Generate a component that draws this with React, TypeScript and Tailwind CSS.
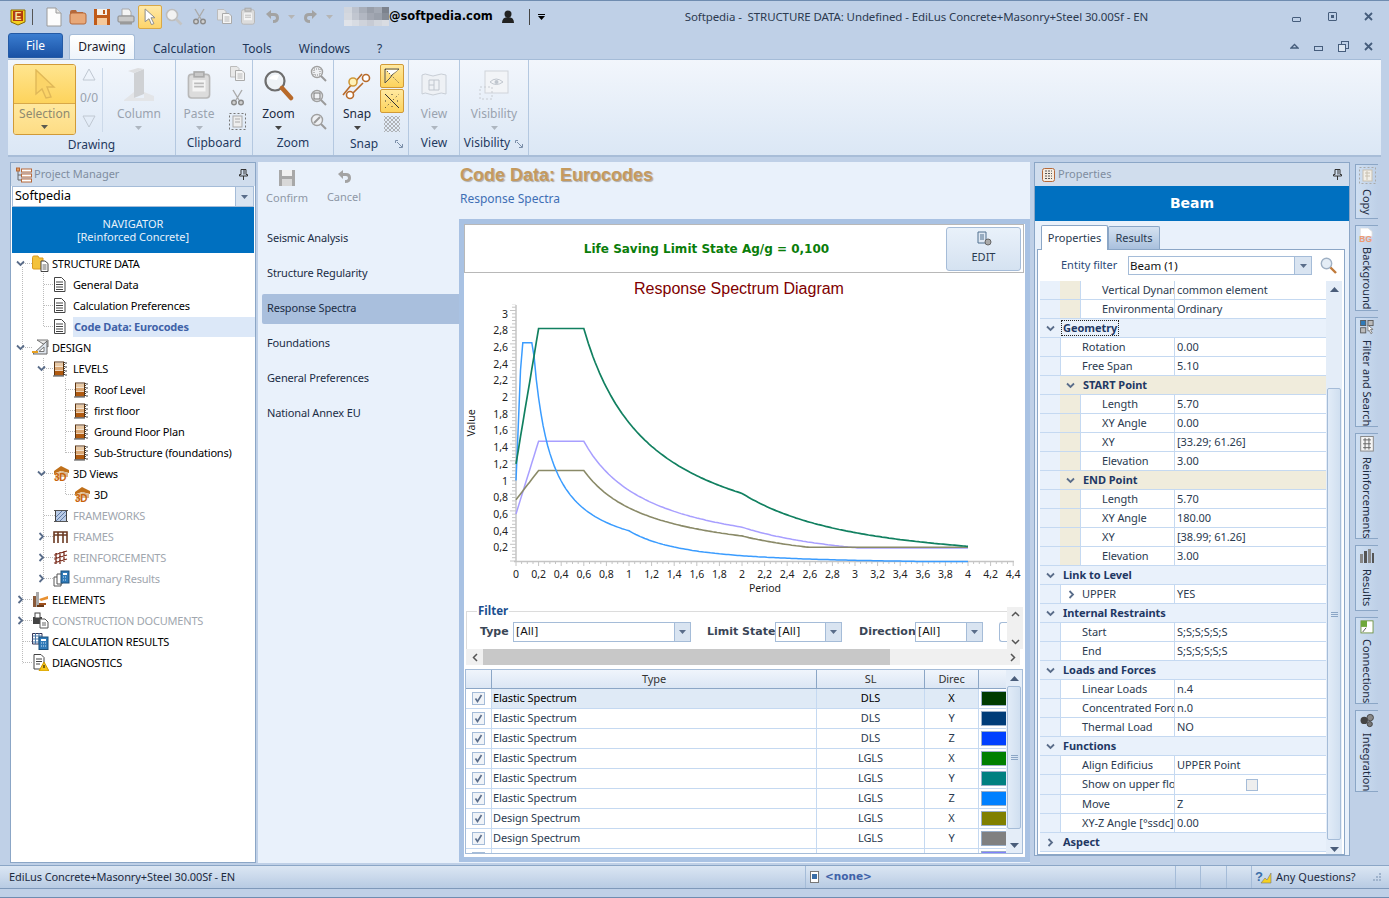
import React from "react";

const ui = "font-['Noto_Sans','Open_Sans',sans-serif]";

const Chev = ({ open, className = "" }: { open: boolean; className?: string }) => (
  <svg width="9" height="9" viewBox="0 0 9 9" className={className}>
    {open ? <path d="M1 2.5 L4.5 6 L8 2.5" fill="none" stroke="#5a6d8a" strokeWidth="1.8" /> : <path d="M2.5 1 L6 4.5 L2.5 8" fill="none" stroke="#5a6d8a" strokeWidth="1.8" />}
  </svg>
);

const Drop = ({ c = "#555" }: { c?: string }) => (
  <svg width="7" height="4" viewBox="0 0 7 4"><path d="M0 0H7L3.5 4Z" fill={c} /></svg>
);

const Doc = () => (
  <svg width="13" height="15" viewBox="0 0 13 15"><path d="M1.5.5H8.5L12 4V14.5H1.5Z" fill="#fff" stroke="#444" /><path d="M3 5H10M3 7.5H10M3 10H10M3 12.5H10" stroke="#444" /></svg>
);
const FolderDoc = () => (
  <svg width="17" height="17" viewBox="0 0 17 17"><path d="M0.5 2.5Q.5 1 2 1H6L7 3H11V14H2Q.5 14 .5 13Z" fill="#f3c23c" stroke="#d99a20" /><path d="M9 6H13L16 8.5V16.5H9Z" fill="#fff" stroke="#444" /><path d="M10.5 10H14.5M10.5 12H14.5M10.5 14H14.5" stroke="#666" /></svg>
);
const Design = () => (
  <svg width="17" height="17" viewBox="0 0 17 17"><path d="M5 1H16V8Z" fill="#e8e8e8" stroke="#777" /><path d="M1 15L15 2V15Z" fill="#dfe6ee" stroke="#666" /><path d="M7 12.5L12 8V12.5Z" fill="#fff" stroke="#777" /><path d="M0 12H6V14H0Z" fill="#e8a020" /></svg>
);
const Levels = () => (
  <svg width="16" height="16" viewBox="0 0 16 16"><rect x="1.5" y="1" width="9" height="13" fill="#fff" stroke="#5a3310" /><rect x="2" y="2" width="8" height="3.5" fill="#e8c9a5" /><rect x="2" y="6" width="8" height="3.5" fill="#dba875" /><rect x="2" y="10" width="8" height="4" fill="#b05a10" /><path d="M0 15H11" stroke="#444" /><path d="M12 2H15M12 6H15M12 10H15M12 14H15" stroke="#444" strokeDasharray="2 1" /><path d="M11.5 1V15" stroke="#444" strokeDasharray="1 1" /></svg>
);
const ThreeD = () => (
  <svg width="17" height="17" viewBox="0 0 17 17"><path d="M1 6L8 1L16 5V8L8 6L1 9Z" fill="#c0701a" /><path d="M2 8L8 6V14H2Z" fill="#e8c79f" /><path d="M8 6L15 8V12H8Z" fill="#d8b78f" /><text x="1" y="16" fontSize="10" fontWeight="700" fill="#c8620a" fontFamily="Liberation Sans">3D</text></svg>
);
const Framework = () => (
  <svg width="16" height="16" viewBox="0 0 16 16"><rect x="2.5" y="2.5" width="11" height="11" fill="#b9cbe6" stroke="#444" /><path d="M3 9L9 3M3 13L13 3M7 13L13 7" stroke="#607ba5" /><path d="M1 2.5H15M1 13.5H15" stroke="#555" /></svg>
);
const Frames = () => (
  <svg width="15" height="14" viewBox="0 0 15 14"><path d="M1 13V2H14V13M5 13V2M10 13V2M1 5H14" fill="none" stroke="#6b3a22" strokeWidth="1.6" /></svg>
);
const Reinf = () => (
  <svg width="15" height="15" viewBox="0 0 15 15"><path d="M1 5L14 1M1 9L14 5M1 13L14 9M3 3V14M7 2V14M11 1V12" fill="none" stroke="#7a2c1c" strokeWidth="1.3" /></svg>
);
const Summary = () => (
  <svg width="17" height="17" viewBox="0 0 17 17"><path d="M1 7H8V16H1Z" fill="#fff" stroke="#555" /><path d="M4 4H9V14H4Z" fill="#fff" stroke="#555" /><rect x="8" y="1" width="8" height="12" fill="#2f7ab8" stroke="#1c507c" /><rect x="10" y="3" width="4" height="2" fill="#fff" /><path d="M10 7H14M10 10H14" stroke="#cfe3f5" strokeDasharray="1 1" /></svg>
);
const Elements = () => (
  <svg width="17" height="17" viewBox="0 0 17 17"><rect x="4" y="1" width="3" height="15" fill="#aaa" /><rect x="1" y="5" width="3" height="11" fill="#8a5a3a" /><path d="M7 8L16 5V8L9 10Z" fill="#e89030" /><path d="M7 12H14V14H7Z" fill="#a0501c" /><path d="M5 14H12V16H5Z" fill="#6a3a18" /></svg>
);
const ConstDoc = () => (
  <svg width="17" height="17" viewBox="0 0 17 17"><rect x="1" y="5" width="9" height="7" fill="#444" /><rect x="3" y="1" width="5" height="5" fill="#fff" stroke="#444" /><path d="M8 7H13L16 10V16H8Z" fill="#fff" stroke="#555" /><path d="M10 11H14M10 13H14" stroke="#666" /></svg>
);
const CalcRes = () => (
  <svg width="17" height="17" viewBox="0 0 17 17"><path d="M0.5.5H10V11H.5Z" fill="#fff" stroke="#335" /><path d="M.5 3H10M.5 6H10M.5 9H10M3.5 0V11M7 0V11" stroke="#4a78a8" /><rect x="7" y="4" width="9" height="12.5" fill="#2f7ab8" stroke="#1c507c" /><rect x="9" y="6" width="5" height="2" fill="#fff" /><path d="M9 10H14M9 13H14" stroke="#cfe3f5" strokeDasharray="1 1" /></svg>
);
const Diag = () => (
  <svg width="17" height="17" viewBox="0 0 17 17"><path d="M2 .5H9L12 3.5V15H2Z" fill="#fff" stroke="#444" /><path d="M4 5H10M4 7.5H10M4 10H8" stroke="#444" /><path d="M12 8L17 17H7Z" fill="#f5c518" stroke="#d09a00" /><path d="M12 11V14" stroke="#000" /></svg>
);

const PageIc = () => (
  <svg width="17" height="20" viewBox="0 0 17 20"><path d="M2 1H11L16 6V19H2Z" fill="#fcfcfc" stroke="#9a9a9a" /><path d="M11 1V6H16" fill="#e4e4e4" stroke="#9a9a9a" /></svg>
);
const FolderIc = () => (
  <svg width="18" height="18" viewBox="0 0 18 18"><path d="M1 4Q1 2 3 2H7L8 4H14V6H1Z" fill="#b5693a" /><rect x="1" y="5" width="16" height="11" rx="2" fill="#e8a878" stroke="#b5693a" /></svg>
);
const SaveIc = () => (
  <svg width="18" height="18" viewBox="0 0 18 18"><rect x="1" y="1" width="16" height="16" fill="#c05a18" /><rect x="4" y="1" width="10" height="6" fill="#f5f0e8" /><rect x="4" y="10" width="10" height="7" fill="#f5c89a" /><rect x="10" y="2" width="2" height="4" fill="#c05a18" /></svg>
);
const PrintIc = () => (
  <svg width="18" height="18" viewBox="0 0 18 18"><path d="M5 1H12L14 4V8H5Z" fill="#f4f4f4" stroke="#a8a8a8" /><rect x="1" y="8" width="16" height="6" rx="1" fill="#c8c8c8" stroke="#8a8a8a" /><rect x="3" y="14" width="12" height="2.5" fill="#9a9a9a" /></svg>
);
const CursorIc = ({ s = 16, f = "#fff", st = "#8a8a8a" }: { s?: number; f?: string; st?: string }) => (
  <svg width={s} height={s * 1.1} viewBox="0 0 16 18"><path d="M3 1L13 10H9L12 16L9.5 17L7 11L3 14Z" fill={f} stroke={st} /></svg>
);
const MagGray = ({ s = 18 }: { s?: number }) => (
  <svg width={s} height={s} viewBox="0 0 18 18"><circle cx="7" cy="7" r="5.5" fill="#f2f2f2" stroke="#bdbdbd" strokeWidth="1.6" /><path d="M11 11L16.5 16.5" stroke="#c4c4c4" strokeWidth="2.6" /></svg>
);
const ScissorsIc = ({ s = 17 }: { s?: number }) => (
  <svg width={s} height={s} viewBox="0 0 17 17" fill="none" stroke="#ababab" strokeWidth="1.4"><path d="M4 1L10 11M13 1L7 11" /><circle cx="5" cy="13.5" r="2.3" fill="#cfcfcf" stroke="#8a8a8a" /><circle cx="12" cy="13.5" r="2.3" fill="#cfcfcf" stroke="#8a8a8a" /></svg>
);
const CopyIc = () => (
  <svg width="17" height="17" viewBox="0 0 17 17"><path d="M1.5 1.5H8L10 3.5V12H1.5Z" fill="#e8e8e8" stroke="#bcbcbc" /><path d="M6.5 5.5H13L15.5 8V15.5H6.5Z" fill="#f5f5f5" stroke="#aaa" /><path d="M8.5 9H13.5M8.5 11H13.5M8.5 13H13.5" stroke="#b8b8b8" /></svg>
);
const PasteIc = ({ s = 16 }: { s?: number }) => (
  <svg width={s} height={s * 1.15} viewBox="0 0 16 18"><rect x="1.5" y="2.5" width="13" height="14.5" rx="2" fill="#dcdcdc" stroke="#b8b8b8" /><rect x="5" y="1" width="6" height="3" fill="#c8c8c8" stroke="#aaa" /><rect x="4" y="6" width="8" height="7" fill="#f4f4f4" /><path d="M5 8H11M5 10H11" stroke="#bbb" /></svg>
);
const UndoIc = ({ flip = false }: { flip?: boolean }) => (
  <svg width="15" height="15" viewBox="0 0 15 15" className={flip ? "-scale-x-100" : ""}><path d="M1 5L6 1V4H9Q14 4 14 9T8 14V11Q11 11 11 9T9 7H6V10Z" fill="#a3a3a3" /></svg>
);
const WinX = () => (
  <svg width="9" height="9" viewBox="0 0 9 9"><path d="M1 1L8 8M8 1L1 8" stroke="#465d7c" strokeWidth="1.8" /></svg>
);
const Pin = () => (
  <svg width="9" height="11" viewBox="0 0 9 11"><path d="M2 .5H7V5.5H8.5V7H.5V5.5H2ZM4.5 7V11" fill="none" stroke="#333" /><path d="M5 1V5.5" stroke="#333" /></svg>
);

const grayBlocks = ["bg-[#d0d5dd]", "bg-[#bcc2cd]", "bg-[#a8aeb9]", "bg-[#989ea9]", "bg-[#a3a9b4]", "bg-[#7c828d]", "bg-[#d4d8df]", "bg-[#c1c6d0]", "bg-[#b2b7c2]", "bg-[#a2a7b2]", "bg-[#9aa0ab]", "bg-[#868c97]", "bg-[#e0e3e9]", "bg-[#d8dce3]", "bg-[#cfd3db]", "bg-[#c7cbd4]", "bg-[#d2d6dd]", "bg-[#d9dce2]"];

function TitleBar() {
  return (
    <div className="h-[32px] flex items-center pl-[10px] pr-[16px] border-t border-[#6f8cb0]">
      <svg width="16" height="18" viewBox="0 0 16 18" className="mr-[3px]"><path d="M1 2H15V14L8 17L1 14Z" fill="#f5d020" stroke="#8a6a00" /><rect x="3" y="3" width="10" height="10" fill="#b03a10" /><text x="8" y="12" fontSize="10" fontWeight="700" textAnchor="middle" fill="#f8e8a0" fontFamily="Liberation Sans">E</text></svg>
      <div className="w-px h-[16px] bg-[#555] ml-[3px] mr-[8px]" />
      <div className="w-[24px] flex justify-center"><PageIc /></div>
      <div className="w-[25px] flex justify-center"><FolderIc /></div>
      <div className="w-[24px] flex justify-center"><SaveIc /></div>
      <div className="w-[24px] flex justify-center"><PrintIc /></div>
      <div className="w-[24px] h-[24px] flex items-center justify-center bg-[linear-gradient(#ffe9a8,#fdd46a)] border border-[#d8a848] rounded-[2px]"><CursorIc /></div>
      <div className="w-[24px] flex justify-center"><MagGray /></div>
      <div className="w-[25px] flex justify-center ml-[1px]"><ScissorsIc /></div>
      <div className="w-[24px] flex justify-center"><CopyIc /></div>
      <div className="w-[24px] flex justify-center"><PasteIc /></div>
      <div className="w-[24px] flex justify-center"><UndoIc /></div>
      <div className="w-[14px] flex justify-center"><Drop c="#b5b5b5" /></div>
      <div className="w-[24px] flex justify-center"><UndoIc flip /></div>
      <div className="w-[14px] flex justify-center"><Drop c="#b5b5b5" /></div>
      <div className="ml-[8px] w-[45px] h-[19px] grid grid-cols-6 grid-rows-3">
        {grayBlocks.map((c, i) => <div key={i} className={c} />)}
      </div>
      <span className="font-['DejaVu_Sans',sans-serif] font-bold text-[11.5px] text-black">@softpedia.com</span>
      <svg width="14" height="13" viewBox="0 0 14 13" className="ml-[8px]"><circle cx="7" cy="4" r="3.5" fill="#222" /><path d="M1 13Q1 7 7 7T13 13Z" fill="#222" /></svg>
      <div className="w-px h-[16px] bg-[#444] ml-[14px]" />
      <div className="ml-[8px] flex flex-col items-center gap-[1px]"><div className="w-[7px] h-px bg-black" /><Drop c="#000" /></div>
      <div className={`${ui} flex-1 text-[11.5px] text-[#2c3a50] ml-[140px] tracking-[-0.1px] whitespace-nowrap`}>Softpedia -&nbsp; STRUCTURE DATA: Undefined - EdiLus Concrete+Masonry+Steel 30.00Sf - EN</div>
      <div className="flex items-center gap-[27px]">
        <div className="w-[9px] h-[5px] mt-[5px] border border-[#465d7c] rounded-[1px]" />
        <div className="w-[9px] h-[9px] border-[1.5px] border-[#465d7c] flex items-center justify-center rounded-[1px]"><div className="w-[3px] h-[3px] bg-[#465d7c]" /></div>
        <WinX />
      </div>
    </div>
  );
}

function TabRow() {
  return (
    <div className={`${ui} h-[27px] flex items-start pl-[8px] pr-[16px] text-[12px] text-[#1c3557]`}>
      <div className="w-[55px] h-[25px] mt-[1px] flex items-center justify-center text-white rounded-t-[3px] bg-[linear-gradient(#3a7dd0,#1a52a5)] border border-[#245aa5]">File</div>
      <div className="ml-[6px] w-[66px] h-[25px] mt-[2px] flex items-center justify-center bg-[linear-gradient(#fff,#eef4fb)] border border-b-0 border-[#a5bcd8] rounded-t-[3px] z-10 text-[#1a1a2a]">Drawing</div>
      <div className="ml-[18px] mt-[8px]">Calculation</div>
      <div className="ml-[27px] mt-[8px]">Tools</div>
      <div className="ml-[27px] mt-[8px]">Windows</div>
      <div className="ml-[27px] mt-[8px]">?</div>
      <div className="flex-1" />
      <div className="flex items-center gap-[15px] mt-[9px]">
        <svg width="9" height="7" viewBox="0 0 9 7"><path d="M1 5L4.5 1.5L8 5Z" fill="none" stroke="#465d7c" strokeWidth="1.3" /></svg>
        <div className="w-[9px] h-[5px] mt-[3px] border border-[#465d7c]" />
        <svg width="11" height="11" viewBox="0 0 11 11"><rect x="3.5" y=".5" width="7" height="7" fill="none" stroke="#465d7c" /><rect x=".5" y="3.5" width="7" height="7" fill="#dce6f2" stroke="#465d7c" /></svg>
        <WinX />
      </div>
    </div>
  );
}

const Group = ({ label, w, launcher, children }: { label: string; w: string; launcher?: boolean; children: React.ReactNode }) => (
  <div className={`${w} h-full flex flex-col border-r border-[#b4c8e0] relative`}>
    <div className="flex-1 flex">{children}</div>
    <div className={`h-[24px] flex items-center justify-center text-[12px] text-[#1f3a5f] ${launcher ? "pr-[14px]" : ""}`}>
      {label}
    </div>
    {launcher && (
      <svg width="8" height="8" viewBox="0 0 8 8" className="absolute right-[5px] bottom-[7px]"><path d="M.5 3V.5H3M7.5 4V7.5H4M2 2L7 7" fill="none" stroke="#7a8ea8" /></svg>
    )}
  </div>
);
const BigBtn = ({ w, label, dim, icon, arrowDim = true }: { w: string; label: string; dim?: boolean; icon: React.ReactNode; arrowDim?: boolean }) => (
  <div className={`${w} flex flex-col items-center pt-[5px]`}>
    <div className="h-[40px] flex items-center justify-center">{icon}</div>
    <div className={`text-[12px] mt-[1px] leading-[16px] ${dim ? "text-[#9aa3af]" : "text-[#1c2a40]"}`}>{label}</div>
    <div className="mt-[4px]"><Drop c={arrowDim ? "#aeb6c0" : "#444"} /></div>
  </div>
);
const Mag = ({ inner }: { inner: React.ReactNode }) => (
  <svg width="17" height="17" viewBox="0 0 17 17"><circle cx="7" cy="7" r="5.5" fill="#eef0f3" stroke="#a0a0a0" strokeWidth="1.4" />{inner}<path d="M11 11L16 16" stroke="#9a9a9a" strokeWidth="2" /></svg>
);

function Ribbon() {
  return (
    <div className={`${ui} h-[98px] mx-[8px] flex items-stretch border-t border-[#a5bcd8] border-b-2 border-b-[#a8bdd8] bg-[linear-gradient(#f2f6fc,#dbe7f5)] relative`}>
      <Group label="Drawing" w="w-[168px]">
        <div className="ml-[5px] mt-[4px] w-[64px] h-[71px] flex flex-col border border-[#d09a38] rounded-[3px] overflow-hidden">
          <div className="h-[39px] bg-[linear-gradient(#ffe58f,#fdd35c)] flex items-center justify-center border-b border-[#d8a848]">
            <svg width="22" height="30" viewBox="0 0 22 30"><path d="M2 1L20 18H13L17 28L12 29L8 20L2 25Z" fill="#fbd468" stroke="#e0b858" strokeWidth="1.4" /></svg>
          </div>
          <div className="flex-1 bg-[linear-gradient(#ffe9a0,#fddc84)] flex flex-col items-center text-[12px] text-[#8f8a70]"><span className="leading-[17px] mt-[1px]">Selection</span><span className="mt-[3px]"><Drop c="#5a5a50" /></span></div>
        </div>
        <div className="w-[26px] mt-[8px] ml-[0px] flex flex-col items-center text-[12px] text-[#9aa3af]">
          <svg width="14" height="13" viewBox="0 0 14 13"><path d="M7 1L13 12H1Z" fill="none" stroke="#c0c8d2" /></svg>
          <span className="mt-[8px]">0/0</span>
          <svg width="14" height="13" viewBox="0 0 14 13" className="mt-[8px]"><path d="M7 12L13 1H1Z" fill="none" stroke="#c0c8d2" /></svg>
        </div>
        <div className="w-px h-[64px] mt-[8px] bg-[#ccd9e9]" />
        <BigBtn w="w-[73px]" label="Column" dim icon={
          <svg width="32" height="34" viewBox="0 0 32 34"><path d="M11 5L21 1V26L11 30Z" fill="#cfd1d4" /><path d="M11 5L5 3L15 0L21 1Z" fill="#dedfe1" /><path d="M1 32L11 24V30H21V24L31 28V33H1Z" fill="#e3e5e8" /></svg>
        } />
      </Group>
      <Group label="Clipboard" w="w-[77px]">
        <BigBtn w="w-[46px]" label="Paste" dim icon={<PasteIc s={26} />} />
        <div className="flex-1 flex flex-col items-center pt-[5px] gap-[7px]">
          <CopyIc />
          <ScissorsIc />
          <svg width="17" height="17" viewBox="0 0 17 17"><rect x=".5" y=".5" width="16" height="16" fill="none" stroke="#777" strokeDasharray="2 2" /><rect x="4" y="3" width="9" height="11" fill="#eee" stroke="#aaa" /><path d="M6 6H11M6 9H11" stroke="#aaa" /></svg>
        </div>
      </Group>
      <Group label="Zoom" w="w-[81px]">
        <BigBtn w="w-[51px]" label="Zoom" arrowDim={false} icon={
          <svg width="30" height="32" viewBox="0 0 30 32"><circle cx="11" cy="12" r="9.5" fill="#eef2f6" stroke="#6e6e6e" strokeWidth="2.2" /><path d="M5 10Q8 5 15 6L13 11Z" fill="#fff" /><path d="M18 19L27 29" stroke="#b86a2a" strokeWidth="4.5" strokeLinecap="round" /></svg>
        } />
        <div className="flex-1 flex flex-col items-center pt-[5px] gap-[7px]">
          <Mag inner={<rect x="4" y="4" width="6" height="6" fill="none" stroke="#888" strokeDasharray="1 1" />} />
          <Mag inner={<rect x="4" y="4" width="6" height="6" fill="none" stroke="#777" />} />
          <Mag inner={<path d="M4 10L10 4" stroke="#999" strokeWidth="2" />} />
        </div>
      </Group>
      <Group label="Snap" w="w-[75px]" launcher>
        <BigBtn w="w-[46px]" label="Snap" arrowDim={false} icon={
          <svg width="30" height="30" viewBox="0 0 30 30"><path d="M1 25L10 14M14 11L20 4M10 24L21 13" stroke="#b86a2a" strokeWidth="1.6" fill="none" /><circle cx="11" cy="12" r="4" fill="#fff2b8" stroke="#d09a38" strokeWidth="1.6" /><circle cx="24" cy="8" r="3.5" fill="#fff" stroke="#b86a2a" strokeWidth="1.6" /><circle cx="8" cy="25" r="3.5" fill="#fff" stroke="#b86a2a" strokeWidth="1.6" /></svg>
        } />
        <div className="flex flex-col items-center pt-[4px] gap-[1px]">
          <div className="w-[24px] h-[24px] bg-[linear-gradient(#ffe9a0,#fdd35c)] border border-[#d09a38] rounded-[2px] flex items-center justify-center">
            <svg width="16" height="16" viewBox="0 0 16 16"><path d="M1 1H15L8 7L6 10L1 15Z" fill="none" stroke="#555" /><path d="M2 2H14L7 7Z" fill="#fff" /><path d="M1 1L15 15" stroke="#333" strokeDasharray="1 2" /></svg>
          </div>
          <div className="w-[24px] h-[24px] bg-[linear-gradient(#ffe9a0,#fdd35c)] border border-[#d09a38] rounded-[2px] flex items-center justify-center">
            <svg width="16" height="16" viewBox="0 0 16 16"><path d="M1 1L15 15" stroke="#333" /><path d="M1 15L7 9M9 7L15 1" stroke="#333" strokeDasharray="1 3" /><path d="M1 8H3M13 8H15M8 1V3M8 13V15" stroke="#333" strokeDasharray="1 1" /></svg>
          </div>
          <svg width="16" height="16" viewBox="0 0 16 16" className="mt-[2px]"><path d="M0 4L4 0M0 8L8 0M0 12L12 0M0 16L16 0M4 16L16 4M8 16L16 8M12 16L16 12M0 12L4 16M0 8L8 16M0 4L12 16M0 0L16 16M4 0L16 12M8 0L16 8M12 0L16 4" stroke="#9a9a9a" strokeWidth=".7" /></svg>
        </div>
      </Group>
      <Group label="View" w="w-[51px]">
        <BigBtn w="w-full" label="View" dim icon={
          <svg width="28" height="26" viewBox="0 0 28 26"><path d="M2 3Q5 1 9 3T17 3T26 3V22Q21 20 17 22T9 22T2 22Z" fill="#eef1f5" stroke="#c8ced6" /><path d="M9 8H19V18H9ZM9 13H14V8M14 13V18" fill="none" stroke="#c0c6ce" /></svg>
        } />
      </Group>
      <Group label="Visibility" w="w-[69px]" launcher>
        <BigBtn w="w-full" label="Visibility" dim icon={
          <svg width="30" height="32" viewBox="0 0 30 32"><rect x="6" y="2" width="23" height="22" fill="#f2f4f7" stroke="#d0d4da" /><rect x="1" y="18" width="12" height="12" fill="none" stroke="#c8ccd2" strokeDasharray="2 2" /><path d="M11 13Q17 7 24 13Q17 18 11 13Z" fill="none" stroke="#c0c6ce" /><circle cx="17.5" cy="13" r="2" fill="#c0c6ce" /></svg>
        } />
      </Group>
    </div>
  );
}

const PanelHead = ({ icon, title }: { icon: React.ReactNode; title: string }) => (
  <div className="h-[23px] flex items-center pl-[3px] pr-[7px] bg-[#d0dded] shrink-0">
    <div className="w-[20px] flex justify-center">{icon}</div>
    <span className="text-[11px] text-[#7f8da0] flex-1">{title}</span>
    <Pin />
  </div>
);

type TreeItem = { l: string; pad: string; chev?: "o" | "c"; ic: React.ReactNode; t: string; dim?: boolean; sel?: boolean };
const L0 = "pl-[4px]", L1 = "pl-[25px]", L2 = "pl-[46px]";
const tree: TreeItem[] = [
  { l: "0", pad: L0, chev: "o", ic: <FolderDoc />, t: "STRUCTURE DATA" },
  { l: "1", pad: L1, ic: <Doc />, t: "General Data" },
  { l: "1", pad: L1, ic: <Doc />, t: "Calculation Preferences" },
  { l: "1", pad: L1, ic: <Doc />, t: "Code Data: Eurocodes", sel: true },
  { l: "0", pad: L0, chev: "o", ic: <Design />, t: "DESIGN" },
  { l: "1", pad: L1, chev: "o", ic: <Levels />, t: "LEVELS" },
  { l: "2", pad: L2, ic: <Levels />, t: "Roof Level" },
  { l: "2", pad: L2, ic: <Levels />, t: "first floor" },
  { l: "2", pad: L2, ic: <Levels />, t: "Ground Floor Plan" },
  { l: "2", pad: L2, ic: <Levels />, t: "Sub-Structure (foundations)" },
  { l: "1", pad: L1, chev: "o", ic: <ThreeD />, t: "3D Views" },
  { l: "2", pad: L2, ic: <ThreeD />, t: "3D" },
  { l: "1", pad: L1, ic: <Framework />, t: "FRAMEWORKS", dim: true },
  { l: "1", pad: L1, chev: "c", ic: <Frames />, t: "FRAMES", dim: true },
  { l: "1", pad: L1, chev: "c", ic: <Reinf />, t: "REINFORCEMENTS", dim: true },
  { l: "1", pad: L1, chev: "c", ic: <Summary />, t: "Summary Results", dim: true },
  { l: "0", pad: L0, chev: "c", ic: <Elements />, t: "ELEMENTS" },
  { l: "0", pad: L0, chev: "c", ic: <ConstDoc />, t: "CONSTRUCTION DOCUMENTS", dim: true },
  { l: "0", pad: L0, ic: <CalcRes />, t: "CALCULATION RESULTS" },
  { l: "0", pad: L0, ic: <Diag />, t: "DIAGNOSTICS" },
];

function LeftPanel() {
  const h = (x: number, y: number, x2: number, k: string) => <path key={k} d={`M${x} ${y + 0.5}H${x2}`} />;
  return (
    <div className={`${ui} w-[246px] ml-[10px] flex flex-col border border-[#8ba6c6] bg-white`}>
      <PanelHead title="Project Manager" icon={
        <svg width="16" height="16" viewBox="0 0 16 16"><path d="M2 3V13H5M2 8H5" fill="none" stroke="#666" /><rect x=".5" y="1" width="3" height="3" fill="#e8a060" stroke="#b5693a" /><rect x="5.5" y="2" width="10" height="3" fill="#fff" stroke="#b5693a" /><rect x="5.5" y="7" width="10" height="3" fill="#fff" stroke="#b5693a" /><rect x="5.5" y="12" width="10" height="3" fill="#fff" stroke="#b5693a" /></svg>
      } />
      <div className="h-[21px] mx-[1px] flex items-center bg-white border border-[#a5bcd8] shrink-0 text-[12.5px] text-black">
        <span className="flex-1 pl-[2px]">Softpedia</span>
        <div className="w-[18px] h-full flex items-center justify-center bg-[#d9e4f1] border-l border-[#a5bcd8]"><Drop c="#5a6d8a" /></div>
      </div>
      <div className="h-[46px] mx-[1px] bg-[#0070c0] flex flex-col items-center justify-center text-[11px] leading-[13px] text-[#e6f0fa] shrink-0">
        <span>NAVIGATOR</span><span>[Reinforced Concrete]</span>
      </div>
      <div className="relative flex-1 pt-[0px] text-[11px] tracking-[-0.2px]">
        <svg className="absolute left-0 top-0 pointer-events-none" width="100" height="420" fill="none" stroke="#bcbcbc" strokeDasharray="1 1">
          <path d="M11.5 14V410.5M32.5 20V73.5M32.5 105V325.5M54.5 125V200M54.5 230V241" />
          {[31, 52, 73].map((y) => h(33, y, 44, `a${y}`))}
          {[136, 157, 178, 199, 241].map((y) => h(55, y, 66, `b${y}`))}
          {[10, 94, 388, 409, 367, 346].map((y) => h(12, y, 22, `c${y}`))}
          {[115, 220, 262, 283, 304, 325].map((y) => h(33, y, 44, `d${y}`))}
        </svg>
        {tree.map((r) => (
          <div key={r.t} className={`relative flex items-center h-[21px] ${r.pad}`}>
            <div className="w-[17px] flex items-center pl-[1px]">{r.chev && <Chev open={r.chev === "o"} />}</div>
            <div className="w-[20px] flex items-center">{r.ic}</div>
            <span className={`flex-1 h-[20px] leading-[20px] whitespace-nowrap ${r.sel ? "bg-[#dce8f8] font-bold text-[#3f62a8] pl-[1px]" : r.dim ? "text-[#a0a6ae]" : "text-black"}`}>{r.t}</span>
          </div>
        ))}
      </div>
    </div>
  );
}

function series(start: number, top: number, t1: number, t2: number, t3: number, floor: number, t0 = 0) {
  const X = (t: number) => 52 + 113 * t;
  const Y = (v: number) => 260 - 83.5 * v;
  const pts: string[] = [`${X(0)} ${Y(start)}`];
  const step = 0.02;
  for (let t = t0 > 0 ? t0 : step; t <= 4.0001; t += step) {
    let v: number;
    if (t < t1) v = start + ((top - start) * (t - 0)) / t1;
    else if (t <= t2) v = top;
    else if (t <= t3) v = (top * t2) / t;
    else v = (top * t2 * t3) / (t * t);
    if (v < floor) v = floor;
    pts.push(`${X(t).toFixed(1)} ${Y(v).toFixed(1)}`);
  }
  return "M" + pts.join("L");
}

function Chart() {
  const xs = Array.from({ length: 23 }, (_, i) => i);
  const ys = Array.from({ length: 15 }, (_, i) => i + 1);
  const lab = (i: number) => (i % 5 === 0 ? String(i / 5) : (i / 5).toFixed(1).replace(".", ","));
  const minorX = Array.from({ length: 89 }, (_, i) => 52 + (113 * i) / 20);
  const minorY = Array.from({ length: 78 }, (_, i) => 257 - (83.5 * i) / 25);
  return (
    <svg width="559" height="295" className="shrink-0 block" fontFamily="'Noto Sans',sans-serif">
      <g stroke="#c4c4c4">
        {minorX.map((x, i) => <path key={i} d={`M${x.toFixed(1)} 257V${i % 4 === 0 ? 262 : 260}`} />)}
        {minorY.map((y, i) => <path key={i} d={`M${i % 5 === 0 ? 46 : 48} ${y.toFixed(1)}H52`} />)}
        <path d="M52 1V258" strokeWidth="1.5" />
        <path d="M50 257.5H550" strokeWidth="1.5" />
      </g>
      <path d={series(0.6, 1.47, 0.2, 0.6, 2, 0.19)} fill="none" stroke="#a89fff" strokeWidth="1.5" />
      <path d={series(0.77, 1.12, 0.2, 0.6, 2, 0.2)} fill="none" stroke="#8a8a68" strokeWidth="1.6" />
      <path d={series(1.0, 2.65, 0.05, 0.15, 1, 0.03)} fill="none" stroke="#3a9cff" strokeWidth="1.5" />
      <path d={series(1.2, 2.82, 0.2, 0.6, 2, 0.2)} fill="none" stroke="#118060" strokeWidth="1.7" />
      {xs.map((i) => <text key={i} x={52 + 22.6 * i} y="274" fontSize="10.5" textAnchor="middle" fill="#222">{lab(i)}</text>)}
      {ys.map((i) => <text key={i} x="44" y={264 - 16.7 * i} fontSize="10.5" textAnchor="end" fill="#222">{lab(i)}</text>)}
      <text x="301" y="288" fontSize="10.5" textAnchor="middle" fill="#222">Period</text>
      <text transform="translate(11 119) rotate(-90)" fontSize="10.5" textAnchor="middle" fill="#222">Value</text>
    </svg>
  );
}

const Combo = ({ w, v }: { w: string; v: string }) => (
  <div className={`${w} h-[20px] flex items-center border border-[#a5bcd8] bg-white text-[11px] text-[#111] shrink-0`}>
    <span className="flex-1 pl-[2px]">{v}</span>
    <div className="w-[16px] h-full flex items-center justify-center bg-[#d9e4f1] border-l border-[#a5bcd8]"><Drop c="#5a6d8a" /></div>
  </div>
);

function Filter() {
  return (
    <div className="relative shrink-0 h-[61px] pl-[2px] flex flex-col">
      <div className="flex flex-1 min-h-0">
        <fieldset className="w-[536px] h-[46px] border-t border-l border-[#dcdcdc] overflow-hidden">
          <legend className="ml-[10px] px-[1px] text-[11.5px] font-bold text-[#1c4f8f] leading-[14px]">Filter</legend>
          <div className="flex items-center mt-[4px] font-['DejaVu_Sans',sans-serif]">
            <span className="ml-[13px] w-[33px] text-[11px] font-bold text-[#3a4656]">Type</span>
            <Combo w="w-[178px]" v="[All]" />
            <span className="ml-[16px] w-[68px] text-[11px] font-bold text-[#3a4656] whitespace-nowrap">Limit State</span>
            <Combo w="w-[67px]" v="[All]" />
            <span className="ml-[17px] w-[56px] text-[11px] font-bold text-[#3a4656] whitespace-nowrap">Direction</span>
            <Combo w="w-[68px]" v="[All]" />
            <div className="ml-[16px] w-[8px] h-[20px] border border-r-0 border-[#a5bcd8] rounded-l-[3px] shrink-0" />
          </div>
        </fieldset>
        <div className="w-[16px] h-[42px] mt-[3px] bg-[#f0f0f0] flex flex-col items-center justify-between py-[4px]">
          <svg width="9" height="6" viewBox="0 0 9 6"><path d="M1 5L4.5 1.5L8 5" fill="none" stroke="#555" strokeWidth="1.5" /></svg>
          <svg width="9" height="6" viewBox="0 0 9 6"><path d="M1 1L4.5 4.5L8 1" fill="none" stroke="#555" strokeWidth="1.5" /></svg>
        </div>
      </div>
      <div className="h-[16px] w-[554px] bg-[#f0f0f0] flex items-center mb-[0px]">
        <div className="w-[17px] flex justify-center">
          <svg width="6" height="9" viewBox="0 0 6 9"><path d="M5 1L1.5 4.5L5 8" fill="none" stroke="#555" strokeWidth="1.5" /></svg>
        </div>
        <div className="w-[407px] h-full bg-[#c8c8c8]" />
        <div className="flex-1 flex justify-end pr-[4px]">
          <svg width="6" height="9" viewBox="0 0 6 9"><path d="M1 1L4.5 4.5L1 8" fill="none" stroke="#555" strokeWidth="1.5" /></svg>
        </div>
      </div>
    </div>
  );
}

const tableRows = [
  ["Elastic Spectrum", "DLS", "X", "bg-[#003c00]"],
  ["Elastic Spectrum", "DLS", "Y", "bg-[#003c78]"],
  ["Elastic Spectrum", "DLS", "Z", "bg-[#0040ff]"],
  ["Elastic Spectrum", "LGLS", "X", "bg-[#008000]"],
  ["Elastic Spectrum", "LGLS", "Y", "bg-[#008080]"],
  ["Elastic Spectrum", "LGLS", "Z", "bg-[#0080ff]"],
  ["Design Spectrum", "LGLS", "X", "bg-[#808000]"],
  ["Design Spectrum", "LGLS", "Y", "bg-[#808080]"],
  ["Design Spectrum", "LGLS", "Z", "bg-[#8080ff]"],
];

const Check = () => (
  <div className="w-[13px] h-[13px] border border-[#a5bcd8] bg-[#f0f3f7] flex items-center justify-center">
    <svg width="9" height="9" viewBox="0 0 9 9"><path d="M1.5 4.5L3.5 7.5L7.5 1" fill="none" stroke="#5a6d8a" strokeWidth="1.6" /></svg>
  </div>
);

const ScrollV = ({ h, thumb, grip }: { h: string; thumb: string; grip: string }) => (
  <div className={`w-[16px] ${h} bg-[#e4edf8] flex flex-col items-center shrink-0`}>
    <div className="h-[16px] flex items-center justify-center"><svg width="9" height="5" viewBox="0 0 9 5"><path d="M0 5H9L4.5 0Z" fill="#4a5d7a" /></svg></div>
    <div className={`${thumb} w-[14px] bg-[linear-gradient(90deg,#e2ecf8,#d0dff0)] border border-[#a5bcd8] rounded-[2px] flex flex-col items-center justify-center gap-[1px]`}>
      <div className={`${grip} flex flex-col gap-[1px]`}><div className="w-[7px] h-px bg-[#8ba6c6]" /><div className="w-[7px] h-px bg-[#8ba6c6]" /><div className="w-[7px] h-px bg-[#8ba6c6]" /></div>
    </div>
    <div className="flex-1" />
    <div className="h-[16px] flex items-center justify-center"><svg width="9" height="5" viewBox="0 0 9 5"><path d="M0 0H9L4.5 5Z" fill="#4a5d7a" /></svg></div>
  </div>
);

function DataTable() {
  return (
    <div className="mt-[4px] ml-[1px] w-[558px] h-[185px] flex border border-[#a5bcd8] overflow-hidden shrink-0">
      <div className="flex-1 flex flex-col min-w-0 text-[11px] tracking-[-0.1px]">
        <div className="h-[19px] shrink-0 flex border-b border-[#8ba6c6] bg-[linear-gradient(#f0f5fc,#dbe6f4)] text-[#333]">
          <div className="w-[26px] border-r border-[#8ba6c6]" />
          <div className="w-[325px] border-r border-[#8ba6c6] flex items-center justify-center">Type</div>
          <div className="w-[108px] border-r border-[#8ba6c6] flex items-center justify-center">SL</div>
          <div className="w-[54px] border-r border-[#8ba6c6] flex items-center justify-center">Direc</div>
          <div className="flex-1" />
        </div>
        {tableRows.map((r, i) => (
          <div key={i} className={`h-[20px] shrink-0 flex border-b border-[#c5d9f1] ${i === 0 ? "bg-[#dfeaf6] text-black" : "bg-white text-[#2a3a50]"}`}>
            <div className="w-[26px] border-r border-[#c5d9f1] flex items-center justify-center bg-white"><Check /></div>
            <div className="w-[325px] border-r border-[#c5d9f1] flex items-center pl-[1px]">{r[0]}</div>
            <div className="w-[108px] border-r border-[#c5d9f1] flex items-center justify-center">{r[1]}</div>
            <div className="w-[54px] border-r border-[#c5d9f1] flex items-center justify-center">{r[2]}</div>
            <div className="flex-1 pl-[2px] py-[2px] bg-white"><div className={`h-full border border-[#99aec8] border-r-0 ${r[3]}`} /></div>
          </div>
        ))}
      </div>
      <ScrollV h="h-full" thumb="h-[143px]" grip="" />
    </div>
  );
}

function Middle() {
  const items = ["Seismic Analysis", "Structure Regularity", "Response Spectra", "Foundations", "General Preferences", "National Annex EU"];
  return (
    <div className={`${ui} w-[772px] ml-[2px] flex bg-[#e9f1fb]`}>
      <div className="w-[201px] flex flex-col text-[11px] tracking-[-0.15px] text-[#1b2d45]">
        <div className="h-[54px] flex pl-[9px] text-[#8e98a6] pt-[7px] tracking-normal">
          <div className="w-[40px] flex flex-col items-center gap-[3px]">
            <svg width="18" height="18" viewBox="0 0 18 18"><rect x="1" y="1" width="16" height="16" fill="#a8a8a8" /><rect x="4" y="1" width="10" height="6" fill="#f0f0f0" /><rect x="4" y="10" width="10" height="7" fill="#d8d8d8" /></svg>
            <span>Confirm</span>
          </div>
          <div className="w-[38px] ml-[18px] flex flex-col items-center gap-[3px]"><UndoIc /><span className="mt-[2px]">Cancel</span></div>
        </div>
        <div className="pt-[5px] pl-[4px] flex flex-col">
          {items.map((t) => (
            <div key={t} className={`h-[35px] flex items-center ${t === "Response Spectra" ? "" : ""}`}>
              <div className={`w-full h-[30px] flex items-center pl-[5px] rounded-l-[2px] ${t === "Response Spectra" ? "bg-[#a9bfdd]" : ""}`}>{t}</div>
            </div>
          ))}
        </div>
      </div>
      <div className="w-[571px] flex flex-col">
        <div className="h-[57px] pl-[1px] pt-[3px] flex flex-col shrink-0">
          <div className="font-['Liberation_Sans',sans-serif] font-bold text-[18px] leading-[21px] text-[#c59a5e] [text-shadow:1px_1px_1px_#aaa]">Code Data: Eurocodes</div>
          <div className="text-[12px] text-[#3f6fb5] mt-[4px]">Response Spectra</div>
        </div>
        <div className="flex-1 flex flex-col border-[5px] border-[#a9c2e3] bg-white mb-[1px] overflow-hidden">
          <div className="h-[49px] shrink-0 flex items-center border border-[#b8b8b8] mr-[1px] bg-white">
            <div className="flex-1 text-center font-['DejaVu_Sans',sans-serif] font-bold text-[12px] text-[#0a7d0a] pl-[2px]">Life Saving Limit State Ag/g = 0,100</div>
            <div className="w-[75px] h-[44px] mr-[2px] flex flex-col items-center justify-center gap-[3px] text-[11px] text-[#2a3a50] bg-[linear-gradient(#e9f1fa,#d5e2f1)] border border-[#a5bcd8] rounded-[3px]">
              <svg width="16" height="15" viewBox="0 0 16 15"><path d="M2 1H10V12H2Z" fill="#dfe8f3" stroke="#51708f" /><path d="M4 4H8M4 6H8M4 8H8" stroke="#51708f" /><circle cx="12" cy="11" r="3" fill="#aaa" stroke="#666" /></svg>
              <span>EDIT</span>
            </div>
          </div>
          <div className="h-[31px] w-[550px] shrink-0 flex items-center justify-center font-['Liberation_Sans',sans-serif] text-[16px] text-[#800000]">Response Spectrum Diagram</div>
          <Chart />
          <div className="h-[5px] shrink-0" />
          <Filter />
          <DataTable />
        </div>
      </div>
    </div>
  );
}

type P = { k: "sec" | "sub" | "l1" | "l2"; a: string; b?: string; open?: boolean; chev?: boolean; box?: boolean };
const props: P[] = [
  { k: "l2", a: "Vertical Dynam", b: "common element" },
  { k: "l2", a: "Environmental", b: "Ordinary" },
  { k: "sec", a: "Geometry", open: true },
  { k: "l1", a: "Rotation", b: "0.00" },
  { k: "l1", a: "Free Span", b: "5.10" },
  { k: "sub", a: "START Point" },
  { k: "l2", a: "Length", b: "5.70" },
  { k: "l2", a: "XY Angle", b: "0.00" },
  { k: "l2", a: "XY", b: "[33.29; 61.26]" },
  { k: "l2", a: "Elevation", b: "3.00" },
  { k: "sub", a: "END Point" },
  { k: "l2", a: "Length", b: "5.70" },
  { k: "l2", a: "XY Angle", b: "180.00" },
  { k: "l2", a: "XY", b: "[38.99; 61.26]" },
  { k: "l2", a: "Elevation", b: "3.00" },
  { k: "sec", a: "Link to Level", open: true },
  { k: "l1", a: "UPPER", b: "YES", chev: true },
  { k: "sec", a: "Internal Restraints", open: true },
  { k: "l1", a: "Start", b: "S;S;S;S;S;S" },
  { k: "l1", a: "End", b: "S;S;S;S;S;S" },
  { k: "sec", a: "Loads and Forces", open: true },
  { k: "l1", a: "Linear Loads", b: "n.4" },
  { k: "l1", a: "Concentrated Forc", b: "n.0" },
  { k: "l1", a: "Thermal Load", b: "NO" },
  { k: "sec", a: "Functions", open: true },
  { k: "l1", a: "Align Edificius", b: "UPPER Point" },
  { k: "l1", a: "Show on upper floc", box: true },
  { k: "l1", a: "Move", b: "Z" },
  { k: "l1", a: "XY-Z Angle  [°ssdc]", b: "0.00" },
  { k: "sec", a: "Aspect", open: false },
];

function PropRow({ p }: { p: P }) {
  if (p.k === "sec")
    return (
      <div className="h-[19px] flex items-center bg-[#e9f1fb] border-b border-[#c5d9f1] font-bold text-[#1f3864]">
        <div className="w-[22px] pl-[6px] flex items-center"><Chev open={!!p.open} /></div>
        <span className={`px-[1px] leading-[14px] ${p.a === "Geometry" ? "outline-1 outline-dotted outline-[#222]" : ""}`}>{p.a}</span>
      </div>
    );
  if (p.k === "sub")
    return (
      <div className="h-[19px] flex items-center border-b border-[#c5d9f1]">
        <div className="w-[20px] h-full bg-[#e9f1fb]" />
        <div className="flex-1 h-full flex items-center bg-[#f0ecdc] font-bold text-[#1f3864]">
          <div className="w-[23px] pl-[6px] flex items-center"><Chev open /></div>
          {p.a}
        </div>
      </div>
    );
  return (
    <div className={`${p.box ? "h-[20px]" : "h-[19px]"} flex items-center text-[#2a3a50]`}>
      <div className="w-[20px] h-full bg-[#e9f1fb] border-b border-[#c5d9f1]" />
      {p.k === "l2" && <div className="w-[20px] h-full bg-[#f0ecdc] border-b border-[#c5d9f1]" />}
      <div className={`${p.k === "l2" ? "w-[95px] pl-[21px]" : "w-[115px] pl-[21px]"} h-full relative flex items-center bg-white border-r border-b border-[#c5d9f1] overflow-hidden whitespace-nowrap border-l`}>
        {p.chev && <span className="absolute left-[6px] top-[5px]"><Chev open={false} /></span>}
        {p.a}
      </div>
      <div className={`flex-1 h-full flex items-center bg-white border-b border-[#c5d9f1] pl-[2px] ${p.box ? "justify-center" : ""}`}>
        {p.box ? <div className="w-[12px] h-[12px] border border-[#a5bcd8] bg-[#eee]" /> : p.b}
      </div>
    </div>
  );
}

function RightPanel() {
  return (
    <div className={`${ui} w-[316px] ml-[4px] mb-[7px] flex flex-col border border-[#8ba6c6] bg-[#e9f1fb]`}>
      <PanelHead title="Properties" icon={
        <svg width="13" height="14" viewBox="0 0 13 14"><rect x=".5" y=".5" width="12" height="13" rx="2" fill="#f5ece0" stroke="#b5693a" /><path d="M3 3H10M3 5.5H10M3 8H10M3 10.5H10" stroke="#555" strokeDasharray="2 1" /></svg>
      } />
      <div className="h-[35px] shrink-0 bg-[#0070c0] flex items-center justify-center text-white font-bold text-[14px] font-['DejaVu_Sans',sans-serif]">Beam</div>
      <div className="h-[28px] shrink-0 flex items-end pl-[6px] text-[11px] text-[#2a3a50]">
        <div className="w-[67px] h-[25px] flex items-center justify-center bg-white border border-b-0 border-[#8ba6c6] rounded-t-[2px] z-10 -mb-px">Properties</div>
        <div className="w-[52px] h-[23px] flex items-center justify-center bg-[linear-gradient(#d5e2f1,#a9c0dd)] border border-b-0 border-[#8ba6c6] rounded-t-[2px]">Results</div>
      </div>
      <div className="flex-1 mx-[2px] mr-[4px] flex flex-col bg-white border border-[#8ba6c6] min-h-0 overflow-hidden">
        <div className="h-[31px] shrink-0 flex items-center pl-[23px] text-[11px] text-[#2c4a78]">
          <span className="w-[67px]">Entity filter</span>
          <div className="w-[184px] h-[19px] flex items-center border border-[#a5bcd8] bg-white text-[11.5px] text-[#111]">
            <span className="flex-1 pl-[1px]">Beam (1)</span>
            <div className="w-[17px] h-full flex items-center justify-center bg-[#d9e4f1] border-l border-[#a5bcd8]"><Drop c="#5a6d8a" /></div>
          </div>
          <svg width="17" height="17" viewBox="0 0 17 17" className="ml-[8px]"><circle cx="6.5" cy="6.5" r="5.2" fill="#e4edf6" stroke="#9fb0c4" strokeWidth="1.4" /><path d="M10.5 10.5L16 16" stroke="#c07a3a" strokeWidth="2.4" /></svg>
        </div>
        <div className="flex pl-[2px] text-[11px] tracking-[-0.05px] flex-1 min-h-0">
          <div className="w-[286px] flex flex-col">
            {props.map((p, i) => <PropRow key={i} p={p} />)}
          </div>
          <ScrollV h="h-[576px]" thumb="mt-[91px] h-[452px]" grip="" />
        </div>
      </div>
    </div>
  );
}

const strip: { t: string; w: string; ic: React.ReactNode }[] = [
  { t: "Copy", w: "h-[55px]", ic: <svg width="17" height="17" viewBox="0 0 17 17"><rect x=".5" y=".5" width="16" height="16" fill="none" stroke="#aaa" strokeDasharray="2 2" /><rect x="4" y="3" width="9" height="11" fill="#f2efe8" stroke="#c8c0b0" /><path d="M6 6H11M6 9H11M8 4V13" stroke="#c8c0b0" /></svg> },
  { t: "Background", w: "h-[86px]", ic: <svg width="18" height="17" viewBox="0 0 18 17"><path d="M1 0H10L15 4V10H1Z" fill="#fff" stroke="#ddd" /><text x="0" y="16" fontSize="10" fontWeight="700" fill="#f09a70" fontFamily="Liberation Sans">BG</text></svg> },
  { t: "Filter and Search", w: "h-[110px]", ic: <svg width="17" height="17" viewBox="0 0 17 17"><rect x=".5" y=".5" width="6" height="6" fill="#2f7ab8" stroke="#555" /><rect x="9" y=".5" width="6" height="6" fill="#bbb" stroke="#555" /><rect x=".5" y="9" width="6" height="6" fill="#bbb" stroke="#555" /><path d="M9 6L15 11H12L14 15L12.5 16L10.5 12L9 13Z" fill="#fff" stroke="#777" /></svg> },
  { t: "Reinforcements", w: "h-[106px]", ic: <svg width="14" height="16" viewBox="0 0 14 16"><rect x=".5" y=".5" width="13" height="15" fill="#f4f4f4" stroke="#888" /><path d="M3 4H11M3 8H11M3 12H11M5 2V14M9 2V14" stroke="#666" /></svg> },
  { t: "Results", w: "h-[66px]", ic: <svg width="16" height="16" viewBox="0 0 16 16"><rect x="1" y="6" width="3" height="9" fill="#888" /><rect x="5" y="3" width="3" height="12" fill="#555" /><rect x="9" y="1" width="3" height="14" fill="#888" /><rect x="13" y="5" width="2" height="10" fill="#555" /></svg> },
  { t: "Connections", w: "h-[87px]", ic: <svg width="16" height="16" viewBox="0 0 16 16"><rect x="1" y="1" width="14" height="14" fill="#fff" stroke="#6a8f3a" /><path d="M1 1H8V8H1Z" fill="#6ea83a" /><path d="M3 14L7 9" stroke="#444" /></svg> },
  { t: "Integration", w: "h-[82px]", ic: <svg width="16" height="16" viewBox="0 0 16 16"><circle cx="5" cy="8" r="4" fill="#444" /><circle cx="11.5" cy="5" r="3.5" fill="#888" stroke="#444" /><circle cx="11" cy="12" r="2.8" fill="#777" stroke="#444" /></svg> },
];

function RightStrip() {
  return (
    <div className={`${ui} w-[23px] ml-[5px] flex flex-col gap-[6px] pt-[2px] text-[11px] text-[#1c2a40]`}>
      {strip.map((s) => (
        <div key={s.t} className={`${s.w} flex flex-col items-center pt-[2px] gap-[5px] border border-r-0 border-[#8ba6c6] bg-[linear-gradient(90deg,#cfdff2,#bed0e7)] overflow-hidden shrink-0`}>
          {s.ic}
          <span className="[writing-mode:vertical-rl] whitespace-nowrap leading-[16px]">{s.t}</span>
        </div>
      ))}
    </div>
  );
}

function StatusBar() {
  return (
    <div className={`${ui} h-[24px] flex items-center text-[11px] border-t border-[#8ba6c6] border-b border-b-[#7f99ba] bg-[linear-gradient(#dbe6f3,#b8cbe3)] text-[#1c2a40] mx-[0px] pl-[9px]`}>
      <span className="w-[796px] tracking-[-0.1px]">EdiLus Concrete+Masonry+Steel 30.00Sf - EN</span>
      <div className="w-[370px] h-full flex items-center border-l border-[#a5bcd8] pl-[4px]">
        <svg width="9" height="12" viewBox="0 0 9 12"><rect x=".5" y=".5" width="8" height="11" fill="#fff" stroke="#777" /><rect x="2" y="3" width="5" height="5" fill="#3a6ea8" /></svg>
        <span className="ml-[6px] font-bold text-[#3f62a8] text-[10.5px] font-['DejaVu_Sans',sans-serif]">&lt;none&gt;</span>
      </div>
      <div className="w-[25px] h-full border-l border-[#a5bcd8]" />
      <div className="w-[26px] h-full border-l border-[#a5bcd8]" />
      <div className="w-[25px] h-full border-l border-[#a5bcd8]" />
      <div className="h-full flex items-center border-l border-[#a5bcd8] pl-[3px]">
        <svg width="18" height="14" viewBox="0 0 18 14"><text x="0" y="11" fontSize="13" fontWeight="700" fill="#3a6ea8" fontFamily="Liberation Sans">?</text><path d="M6 13L10 8L12 10L16 3V13Z" fill="#f5d020" stroke="#777" strokeWidth=".6" /></svg>
        <span className="ml-[3px]">Any Questions?</span>
      </div>
      <div className="flex-1" />
      <svg width="10" height="10" viewBox="0 0 10 10" className="mr-[7px]" fill="#9fb3cc"><rect x="7" y="1" width="2" height="2" /><rect x="4" y="4" width="2" height="2" /><rect x="7" y="4" width="2" height="2" /><rect x="1" y="7" width="2" height="2" /><rect x="4" y="7" width="2" height="2" /><rect x="7" y="7" width="2" height="2" /></svg>
    </div>
  );
}

export default function App() {
  return (
    <div className="w-[1389px] h-[898px] bg-[#bfd0e7] flex flex-col overflow-hidden">
      <TitleBar />
      <TabRow />
      <Ribbon />
      <div className="h-[708px] flex pt-[5px] pb-[2px]">
        <LeftPanel />
        <Middle />
        <RightPanel />
        <RightStrip />
      </div>
      <StatusBar />
      <div className="flex-1 border-b border-[#6f8cb0]" />
    </div>
  );
}
